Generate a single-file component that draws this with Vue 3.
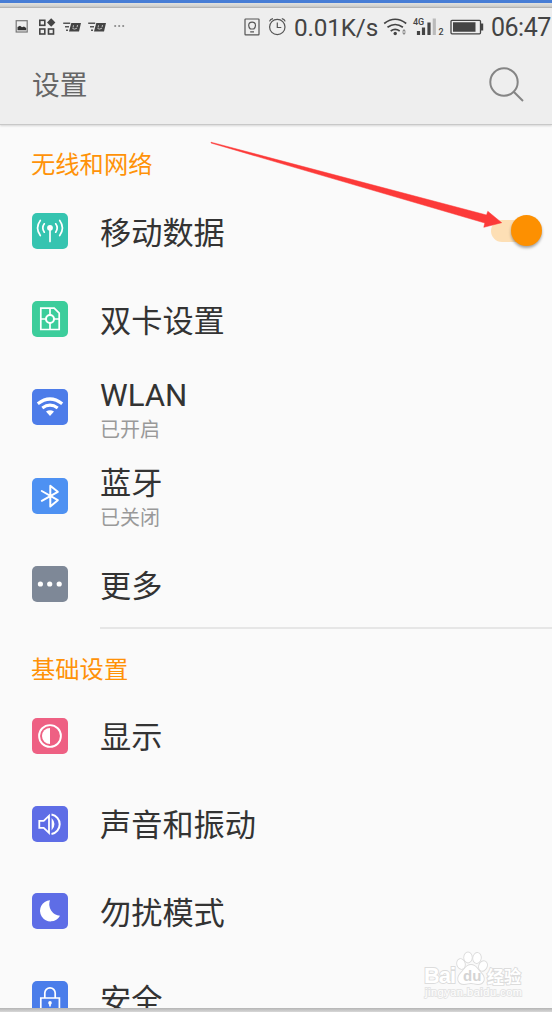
<script setup>
const network = [
  { id: 'data', title: '移动数据', color: '#35c4b0', toggle: true },
  { id: 'sim', title: '双卡设置', color: '#3ccd9b' },
  { id: 'wlan', title: 'WLAN', sub: '已开启', color: '#4d7ce9' },
  { id: 'bluetooth', title: '蓝牙', sub: '已关闭', color: '#4e91f2' },
  { id: 'more', title: '更多', color: '#7e8897' }
];

const basic = [
  { id: 'display', title: '显示', color: '#ee6083' },
  { id: 'sound', title: '声音和振动', color: '#5e6de6' },
  { id: 'dnd', title: '勿扰模式', color: '#5e6de6' },
  { id: 'security', title: '安全', color: '#4a7dea' }
];

const groups = [
  { name: '无线和网络', items: network },
  { name: '基础设置', items: basic }
];
</script>

<template>
  <div class="page">
    <div class="top-line"></div>
    <div class="top-shadow"></div>

    <div class="screen">
      <header class="header">
        <div class="status">
          <svg class="status-left" width="112" height="20" viewBox="0 0 112 20">
            <rect x="1.2" y="2.7" width="11" height="11.3" fill="none" stroke="#777" stroke-width="1.2" />
            <path d="M2.500 12.300V9L5 7.800l2 1.500 2-.8 2.200 1.400v2.400z" fill="#333" />
            <g fill="none" stroke="#444" stroke-width="1.6">
              <rect x="24.8" y="2.300" width="5" height="5" />
              <rect x="24.8" y="11" width="5" height="5" />
              <rect x="33.500" y="11" width="5" height="5" />
            </g>
            <path d="M36.200 .3l4.200 4.200-4.200 4.200L32 4.500z" fill="#444" />
            <g v-for="x in [48, 73]" :key="x" :transform="`translate(${x} -.5)`">
              <path d="M.2 5.800h7M2 9.300h4M3 12.800h2" fill="none" stroke="#555" stroke-width="1.500" />
              <path d="M8.300 5.500h9.700l-2 8.500H6z" fill="#444" />
              <path d="M10.500 7.800l-.4 2.200M14.500 7.500l-.4 2M9.500 11q2 1.400 4.600-.4" fill="none" stroke="#ccc" stroke-width=".9" />
            </g>
            <path d="M99.300 8h1.800M103.300 8h1.800M107.300 8h1.800" stroke="#777" stroke-width="1.600" />
          </svg>

          <svg class="status-alarm" width="44" height="20" viewBox="0 0 44 20">
            <g fill="none" stroke="#555" stroke-width="1.2">
              <rect x="1" y="1" width="14" height="15.800" rx=".6" />
              <path d="M6.400 11C5.200 9.800 4.700 8.800 4.700 7.500a3.400 3.400 0 0 1 6.800 0c0 1.300-.5 2.300-1.700 3.500zM6.200 13.800h3.800" />
              <circle cx="33.300" cy="9" r="7.700" />
              <path d="M33.300 4.500v5h4M25.500 3.400q.8-2.200 3.500-2.700M37.800.7q2.600.5 3.400 2.700" />
            </g>
          </svg>
          <span class="speed">0.01K/s</span>

          <svg class="status-signal" width="104" height="20" viewBox="0 0 104 20">
            <g fill="none" stroke="#444" stroke-width="1.700">
              <path d="M1.200 5.500q11-8.500 22 0M4.500 9.300q7.700-5.600 15.400 0M7.700 13q4.500-3.200 9 0" />
            </g>
            <circle cx="12.200" cy="15.500" r="1.700" fill="#444" />
            <path d="M21 11l2 2.500h-4zM21 17l2-2.500h-4z" fill="#888" />
            <text class="tiny" x="30" y="7">4G</text>
            <path d="M35.500 17v-4M40.500 17V9.500M46 17V4.500" stroke="#444" stroke-width="3.200" />
            <path d="M51.300 17V.5" stroke="#bbb" stroke-width="3.200" />
            <text class="tiny" x="55.500" y="17.300">2</text>
            <rect x="68" y="2.300" width="29.500" height="13.500" rx="1" fill="none" stroke="#444" stroke-width="1.300" />
            <path d="M70 4.300h22.500v9.500H70zM97.700 5.500h2.500v7h-2.500z" fill="#444" />
          </svg>
          <span class="clock">06:47</span>
        </div>

        <div class="title-bar">
          <h1 class="title">设置</h1>
          <svg class="search" width="36" height="36" viewBox="0 0 36 36" fill="none" stroke="#858585" stroke-width="2">
            <circle cx="15" cy="15" r="13.700" />
            <path d="M24.700 24.700l9.300 9.300" />
          </svg>
        </div>
      </header>

      <section v-for="group in groups" :key="group.name" class="group">
        <h2 class="group-name">{{ group.name }}</h2>
        <div v-for="item in group.items" :key="item.id" class="row" :class="{ double: item.sub }">
          <svg class="icon" viewBox="0 0 36 36" fill="none" stroke="#fff" stroke-width="1.700">
            <rect width="36" height="36" rx="5" :fill="item.color" stroke="none" />
            <g v-if="item.id === 'data'" stroke-linecap="round">
              <path d="M18 16v12.500M12.300 10.800q-3 4.200 0 8.400M23.700 10.800q3 4.200 0 8.400M8.300 7.500q-5.500 7.500 0 15M27.700 7.500q5.500 7.500 0 15" />
              <circle cx="18" cy="14.800" r="2.900" fill="#fff" stroke="none" />
            </g>
            <g v-else-if="item.id === 'sim'">
              <path d="M8.800 7.200h13.400l5 5v16.300H8.800z" />
              <circle cx="18" cy="18" r="4" stroke-width="2" />
              <path d="M18 7.500V14M18 22v6.500M9 18h5M22 18h5" />
            </g>
            <g v-else-if="item.id === 'wlan'">
              <path d="M5.800 14.800q12.200-9.600 24.400 0M10.300 19q7.700-5.600 15.400 0" stroke-width="3.200" />
              <path d="M14 22.600q4-2.600 8 0l-4 4.300z" fill="#fff" stroke="none" />
            </g>
            <path v-else-if="item.id === 'bluetooth'" d="M9.800 13l16 9.200-7.500 6.300V7.700l7.500 6.100-16 9" stroke-width="2" stroke-linejoin="round" stroke-linecap="round" />
            <g v-else-if="item.id === 'more'" fill="#fff" stroke="none">
              <circle cx="8.400" cy="18" r="2.600" />
              <circle cx="17.700" cy="18" r="2.600" />
              <circle cx="27.200" cy="18" r="2.600" />
            </g>
            <g v-else-if="item.id === 'display'">
              <circle cx="18" cy="18" r="10.900" stroke-width="1.900" />
              <path d="M18 10v16a8 8 0 0 1 0-16z" fill="#fff" stroke="none" />
            </g>
            <g v-else-if="item.id === 'sound'">
              <path d="M7.300 14.800h4.400l5.300-5v17l-5.300-5H7.300z" stroke-width="1.800" />
              <path d="M19.600 12q5.800 6.200 0 12.600z" fill="#fff" stroke="none" />
              <path d="M19.500 8.500a9.900 9.900 0 0 1 0 19.500" stroke-width="2" />
            </g>
            <path v-else-if="item.id === 'dnd'" d="M18 7.200A10.600 10.600 0 1 0 28 22.700 11.500 11.500 0 0 1 18 7.200z" fill="#fff" stroke="none" />
            <g v-else>
              <path d="M12.800 16.500V12a5.200 5.200 0 0 1 10.400 0v4.500M8.800 17h18.600v14H8.800z" />
              <path d="M18 21.500v4" />
              <circle cx="18" cy="21.900" r="1.800" fill="#fff" stroke="none" />
            </g>
          </svg>
          <div class="label">
            <div class="name">{{ item.title }}</div>
            <div v-if="item.sub" class="sub">{{ item.sub }}</div>
          </div>
          <div v-if="item.toggle" class="toggle">
            <span class="knob"></span>
          </div>
        </div>
      </section>

      <svg class="arrow" width="294" height="90" viewBox="0 0 294 90">
        <path d="M1 1.200L276.500 74 277.800 70.300 291.700 81.700 273.800 86.300 274.800 82 1 2z" fill="#fc3a39" stroke="#fc3a39" stroke-width=".5" />
      </svg>

      <svg class="watermark" width="106" height="54" viewBox="0 0 106 54">
        <g class="mark">
          <text x="3" y="33" font-size="22" textLength="32">Bai</text>
          <path d="M50 15c5 0 6 4 10 8 5 5 3 11-3 11-3 0-5-1-7-1s-4 1-7 1c-6 0-8-6-3-11 4-4 5-8 10-8z" />
          <ellipse cx="40" cy="14" rx="3.800" ry="5" transform="rotate(-15 40 14)" />
          <ellipse cx="47" cy="7.500" rx="3.800" ry="5" />
          <ellipse cx="56" cy="8" rx="3.800" ry="5" transform="rotate(10 56 8)" />
          <ellipse cx="62" cy="16" rx="3.800" ry="5" transform="rotate(25 62 16)" />
          <text x="66" y="33" font-size="17" textLength="34">经验</text>
        </g>
        <text class="du" x="42" y="31" font-size="15">du</text>
        <text class="mark url" x="4" y="46" font-size="11" textLength="97">jingyan.baidu.com</text>
      </svg>
    </div>
    <div class="bottom-shadow"></div>
  </div>
</template>

<style>
body {
  margin: 0;
}
</style>

<style scoped>
.page {
  width: 552px;
  height: 1012px;
  overflow: hidden;
  font-family: Roboto, "Noto Sans CJK SC", sans-serif;
  color: #333;
}

.top-line {
  height: 3px;
  background: #477dd5;
}

.top-shadow {
  height: 5px;
  background: linear-gradient(#e2e2df, #d0d0cd 65%, #aaa);
}

.screen {
  position: relative;
  height: 1000px;
  background: #fafafa;
  overflow: hidden;
}

.bottom-shadow {
  height: 4px;
  background: linear-gradient(#b4b4b4, #d8d8d8);
}

.header {
  box-sizing: border-box;
  height: 117px;
  background: #eee;
  border-bottom: 1px solid #c8c8c8;
  box-shadow: 0 1px 2px rgba(0, 0, 0, 0.15);
}

.status {
  display: flex;
  align-items: center;
  height: 39px;
  white-space: nowrap;
  color: #444;
}

.status svg {
  flex: none;
}

.status-left {
  margin-left: 15px;
}

.status-alarm {
  margin-left: 117px;
}

.speed {
  width: 88px;
  margin-left: 6px;
  font-size: 24.3px;
  letter-spacing: -0.15px;
}

.status-signal {
  margin-left: 1px;
}

.clock {
  margin-left: 4px;
  font-size: 25px;
  letter-spacing: -0.5px;
}

.tiny {
  font-size: 9px;
  font-weight: 500;
  fill: #444;
}

.title-bar {
  display: flex;
  align-items: center;
  justify-content: space-between;
  height: 76px;
  padding: 0 27px 0 32px;
}

.title {
  margin: -4px 0 0;
  font-size: 27.7px;
  font-weight: 400;
  color: #666;
}

.group + .group {
  padding-top: 1px;
}

.group-name {
  height: 46px;
  margin: 0;
  padding: 16px 0 0 31px;
  font-size: 24.3px;
  line-height: 47px;
  font-weight: 400;
  color: #ff9208;
}

.row {
  display: flex;
  align-items: center;
  height: 87.7px;
  padding: 0 10px 0 32px;
}

.group:nth-of-type(1) .row {
  height: 88px;
}

.group:nth-of-type(1) .row.double {
  height: 88.5px;
}

.group:nth-of-type(1)::after {
  content: "";
  display: block;
  height: 2px;
  margin: -1px 0 0 100px;
  background: #e6e6e6;
}

.icon {
  flex: none;
  width: 36px;
  height: 36px;
}

.label {
  flex: 1;
  margin-left: 32px;
  padding-top: 5px;
}

.name {
  font-size: 31.2px;
  line-height: 40px;
}

.sub {
  font-size: 20px;
  line-height: 28px;
  color: #999;
}

.toggle {
  position: relative;
  width: 51px;
  height: 22px;
  border-radius: 11px;
  background: linear-gradient(to right, #fddfb5 40px, transparent 40px);
}

.knob {
  position: absolute;
  top: -5px;
  right: 0;
  width: 31px;
  height: 31px;
  border-radius: 50%;
  background: #fd9001;
  box-shadow: 0 2px 3px rgba(0, 0, 0, 0.35);
}

.arrow {
  position: absolute;
  left: 210px;
  top: 133px;
}

.watermark {
  position: absolute;
  left: 421px;
  top: 942px;
  font-family: "Liberation Sans", "Noto Sans CJK SC", sans-serif;
  font-weight: 700;
}

.mark {
  fill: #fff;
  stroke: #dcdcdc;
  stroke-width: 1.8px;
  paint-order: stroke;
}

.url {
  font-weight: 400;
  stroke: #e4e4e4;
}

.du {
  fill: #d4d4d4;
}
</style>
